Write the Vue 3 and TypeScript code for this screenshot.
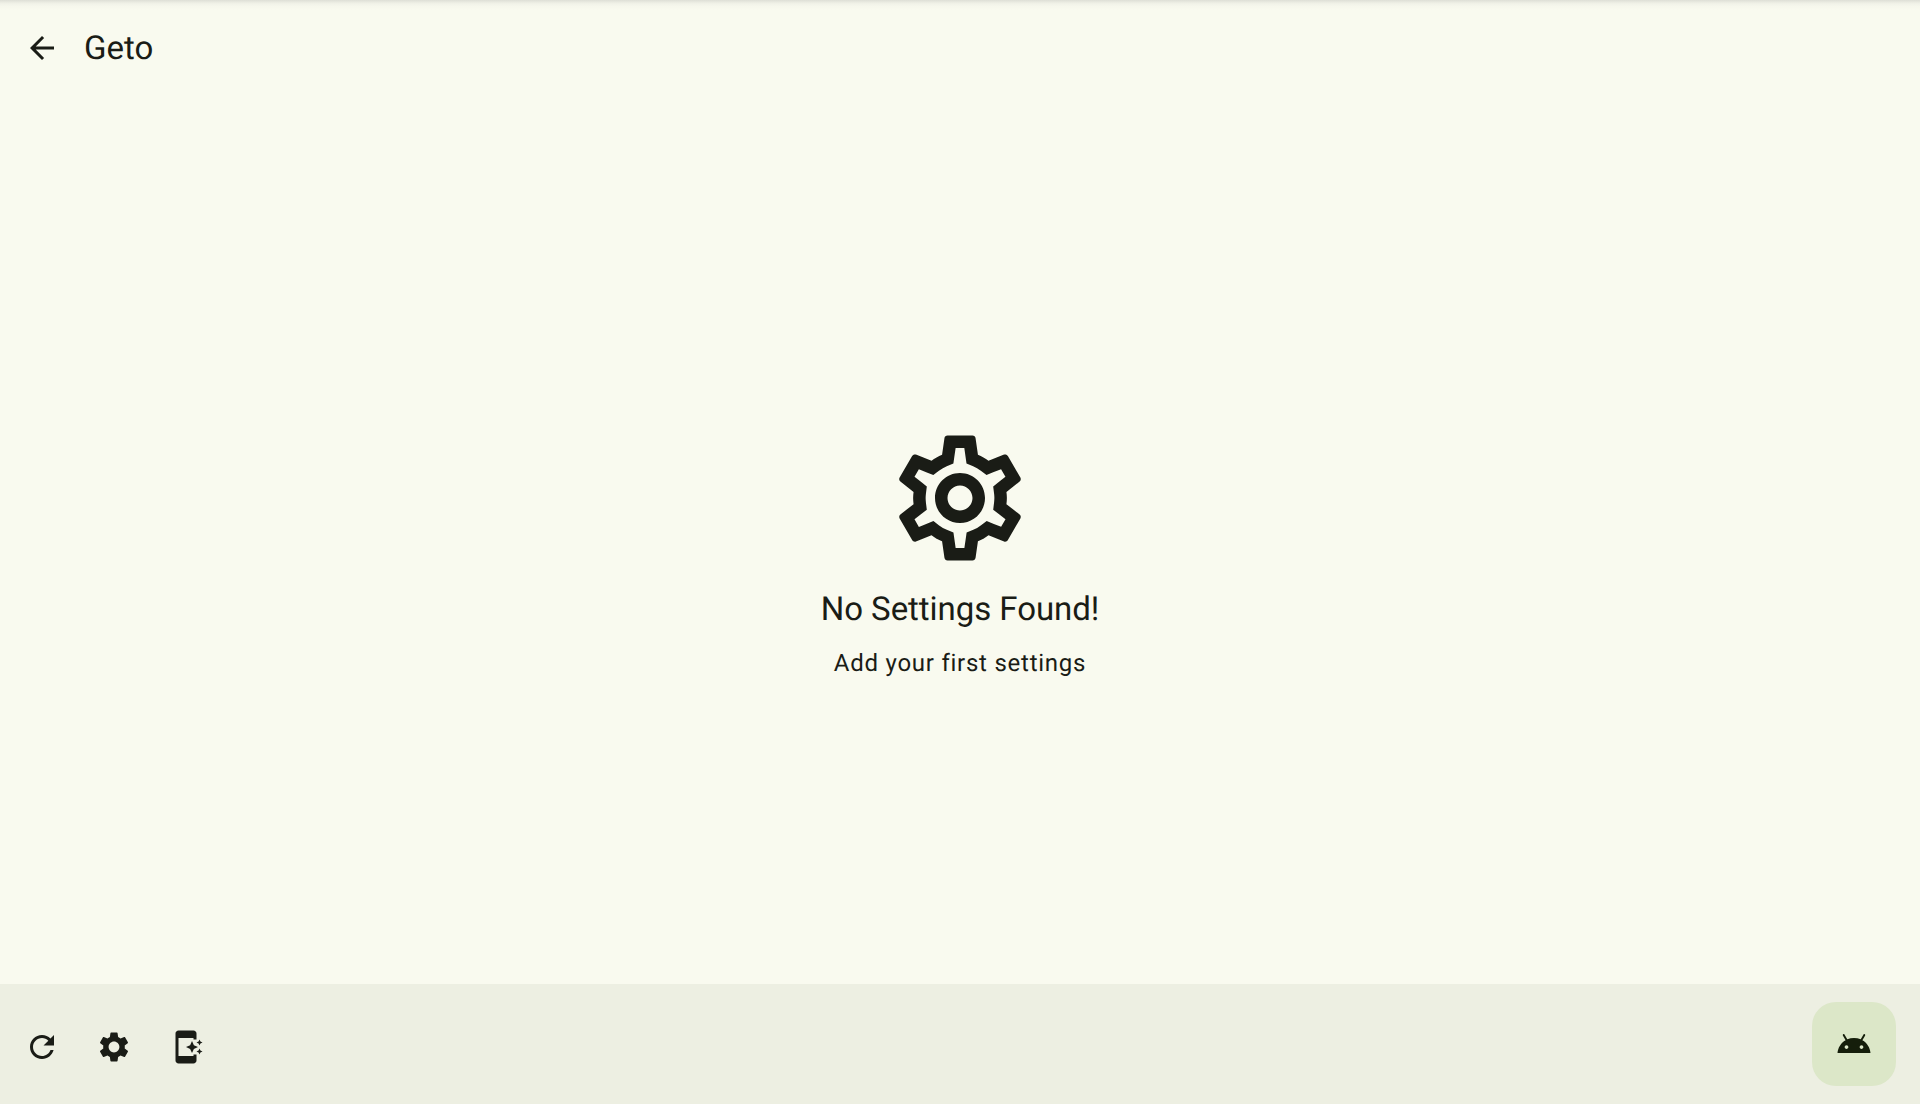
<script setup lang="ts">
interface Action {
  label: string
  path: string
}

const gear =
  'M19.14,12.94c0.04-0.3,0.06-0.61,0.06-0.94c0-0.32-0.02-0.64-0.07-0.94l2.03-1.58c0.18-0.14,0.23-0.41,0.12-0.61l-1.92-3.32c-0.12-0.22-0.37-0.29-0.59-0.22l-2.39,0.96c-0.5-0.38-1.03-0.7-1.62-0.94L14.4,2.81c-0.04-0.24-0.24-0.41-0.48-0.41h-3.84c-0.24,0-0.43,0.17-0.47,0.41L9.25,5.35C8.66,5.59,8.12,5.92,7.63,6.29L5.24,5.33c-0.22-0.08-0.47,0-0.59,0.22L2.74,8.87C2.62,9.08,2.66,9.34,2.86,9.48l2.03,1.58C4.84,11.36,4.8,11.69,4.8,12s0.02,0.64,0.07,0.94l-2.03,1.58c-0.18,0.14-0.23,0.41-0.12,0.61l1.92,3.32c0.12,0.22,0.37,0.29,0.59,0.22l2.39-0.96c0.5,0.38,1.03,0.7,1.62,0.94l0.36,2.54c0.05,0.24,0.24,0.41,0.48,0.41h3.84c0.24,0,0.44-0.17,0.47-0.41l0.36-2.54c0.59-0.24,1.13-0.56,1.62-0.94l2.39,0.96c0.22,0.08,0.47,0,0.59-0.22l1.92-3.32c0.12-0.22,0.07-0.47-0.12-0.61L19.14,12.94zM12,15.6c-1.98,0-3.6-1.62-3.6-3.6s1.62-3.6,3.6-3.6s3.6,1.62,3.6,3.6S13.98,15.6,12,15.6z'

const actions: Action[] = [
  {
    label: 'Revert settings',
    path: 'M17.65,6.35C16.2,4.9 14.21,4 12,4c-4.42,0 -7.99,3.58 -7.99,8s3.57,8 7.99,8c3.73,0 6.84,-2.55 7.73,-6h-2.08c-0.82,2.33 -3.04,4 -5.65,4 -3.31,0 -6,-2.69 -6,-6s2.69,-6 6,-6c1.66,0 3.14,0.69 4.22,1.78L13,11h7V4l-2.35,2.35z',
  },
  { label: 'App settings', path: gear },
  {
    label: 'Shortcut',
    path: 'M17,18H7V6h10v1h2V3c0,-1.1 -0.9,-2 -2,-2H7C5.9,1 5,1.9 5,3v18c0,1.1 0.9,2 2,2h10c1.1,0 2,-0.9 2,-2v-4h-2V18zM20.38,9.62L21,11l0.62,-1.38L23,9l-1.38,-0.62L21,7l-0.62,1.38L19,9L20.38,9.62zM16,8l-1.25,2.75L12,12l2.75,1.25L16,16l1.25,-2.75L20,12l-2.75,-1.25L16,8zM21,13l-0.62,1.38L19,15l1.38,0.62L21,17l0.62,-1.38L23,15l-1.38,-0.62L21,13z',
  },
]
</script>

<template>
  <div class="screen">
    <header class="top-bar">
      <button class="icon-button" aria-label="Back">
        <svg class="icon" viewBox="0 0 24 24">
          <path d="M20,11H7.83l5.59,-5.59L12,4l-8,8 8,8 1.41,-1.41L7.83,13H20v-2z" />
        </svg>
      </button>
      <h1 class="title">Geto</h1>
    </header>

    <main class="empty">
      <svg class="empty-icon" viewBox="0 0 24 24">
        <path
          d="M19.43,12.98c0.04,-0.32 0.07,-0.64 0.07,-0.98 0,-0.34 -0.03,-0.66 -0.07,-0.98l2.11,-1.65c0.19,-0.15 0.24,-0.42 0.12,-0.64l-2,-3.46c-0.09,-0.16 -0.26,-0.25 -0.44,-0.25 -0.06,0 -0.12,0.01 -0.17,0.03l-2.49,1c-0.52,-0.4 -1.08,-0.73 -1.69,-0.98l-0.38,-2.65C14.46,2.18 14.25,2 14,2h-4c-0.25,0 -0.46,0.18 -0.49,0.42l-0.38,2.65c-0.61,0.25 -1.17,0.59 -1.69,0.98l-2.49,-1c-0.06,-0.02 -0.12,-0.03 -0.18,-0.03 -0.17,0 -0.34,0.09 -0.43,0.25l-2,3.46c-0.13,0.22 -0.07,0.49 0.12,0.64l2.11,1.65c-0.04,0.32 -0.07,0.65 -0.07,0.98 0,0.33 0.03,0.66 0.07,0.98l-2.11,1.65c-0.19,0.15 -0.24,0.42 -0.12,0.64l2,3.46c0.09,0.16 0.26,0.25 0.44,0.25 0.06,0 0.12,-0.01 0.17,-0.03l2.49,-1c0.52,0.4 1.08,0.73 1.69,0.98l0.38,2.65c0.03,0.24 0.24,0.42 0.49,0.42h4c0.25,0 0.46,-0.18 0.49,-0.42l0.38,-2.65c0.61,-0.25 1.17,-0.59 1.69,-0.98l2.49,1c0.06,0.02 0.12,0.03 0.18,0.03 0.17,0 0.34,-0.09 0.43,-0.25l2,-3.46c0.12,-0.22 0.07,-0.49 -0.12,-0.64l-2.11,-1.65zM17.45,11.27c0.04,0.31 0.05,0.52 0.05,0.73 0,0.21 -0.02,0.43 -0.05,0.73l-0.14,1.13 0.89,0.7 1.08,0.84 -0.7,1.21 -1.27,-0.51 -1.04,-0.42 -0.9,0.68c-0.43,0.32 -0.84,0.56 -1.25,0.73l-1.06,0.43 -0.16,1.13 -0.2,1.35h-1.4l-0.19,-1.35 -0.16,-1.13 -1.06,-0.43c-0.43,-0.18 -0.83,-0.41 -1.23,-0.71l-0.91,-0.7 -1.06,0.43 -1.27,0.51 -0.7,-1.21 1.08,-0.84 0.89,-0.7 -0.14,-1.13c-0.03,-0.31 -0.05,-0.54 -0.05,-0.74s0.02,-0.43 0.05,-0.73l0.14,-1.13 -0.89,-0.7 -1.08,-0.84 0.7,-1.21 1.27,0.51 1.04,0.42 0.9,-0.68c0.43,-0.32 0.84,-0.56 1.25,-0.73l1.06,-0.43 0.16,-1.13 0.2,-1.35h1.39l0.19,1.35 0.16,1.13 1.06,0.43c0.43,0.18 0.83,0.41 1.23,0.71l0.91,0.7 1.06,-0.43 1.27,-0.51 0.7,1.21 -1.07,0.85 -0.89,0.7 0.14,1.13zM12,8c-2.21,0 -4,1.79 -4,4s1.79,4 4,4 4,-1.79 4,-4 -1.79,-4 -4,-4zM12,14c-1.1,0 -2,-0.9 -2,-2s0.9,-2 2,-2 2,0.9 2,2 -0.9,2 -2,2z"
        />
      </svg>
      <h2 class="empty-title">No Settings Found!</h2>
      <p class="empty-text">Add your first settings</p>
    </main>

    <footer class="bottom-bar">
      <nav class="actions">
        <button v-for="a in actions" :key="a.label" class="icon-button" :aria-label="a.label">
          <svg class="icon" viewBox="0 0 24 24"><path :d="a.path" /></svg>
        </button>
      </nav>
      <button class="fab" aria-label="Launch app">
        <svg class="icon" viewBox="0 0 24 24">
          <path
            d="M17.6,9.48l1.84,-3.18c0.16,-0.31 0.04,-0.69 -0.26,-0.85c-0.29,-0.15 -0.65,-0.06 -0.83,0.22l-1.88,3.24c-2.86,-1.21 -6.08,-1.21 -8.94,0L5.65,5.67c-0.19,-0.29 -0.58,-0.38 -0.87,-0.2C4.5,5.65 4.41,6.01 4.56,6.3L6.4,9.48C3.3,11.25 1.28,14.44 1,18h22C22.72,14.44 20.7,11.25 17.6,9.48zM7,15.25c-0.69,0 -1.25,-0.56 -1.25,-1.25c0,-0.69 0.56,-1.25 1.25,-1.25S8.25,13.31 8.25,14C8.25,14.69 7.69,15.25 7,15.25zM17,15.25c-0.69,0 -1.25,-0.56 -1.25,-1.25c0,-0.69 0.56,-1.25 1.25,-1.25s1.25,0.56 1.25,1.25C18.25,14.69 17.69,15.25 17,15.25z"
          />
        </svg>
      </button>
    </footer>
  </div>
</template>

<style>
body {
  margin: 0;
  overflow: hidden;
}
</style>

<style scoped>
.screen {
  display: flex;
  flex-direction: column;
  height: 100vh;
  background: #f9faef;
  color: #1a1c16;
  font-family: Roboto, 'Liberation Sans', sans-serif;
  text-rendering: geometricPrecision;
}

.top-bar {
  display: flex;
  align-items: center;
  box-sizing: border-box;
  height: 96px;
  padding: 0 6px;
  background: linear-gradient(#dedfd6 0, #e9eae0 2px, #f2f3e9 4px, #f7f8ed 7px, #f9faef 10px);
}

.icon-button {
  display: flex;
  align-items: center;
  justify-content: center;
  width: 72px;
  height: 72px;
  padding: 0;
  border: 0;
  background: none;
  color: inherit;
}

.icon {
  display: block;
  width: 36px;
  height: 36px;
  fill: currentColor;
}

.title,
.empty-title {
  margin: 0;
  font-size: 33px;
  line-height: 42px;
  font-weight: 400;
}

.title {
  margin-left: 6px;
  padding-top: 2px;
}

.empty {
  display: flex;
  flex: 1;
  flex-direction: column;
  align-items: center;
  justify-content: center;
  padding-top: 24px;
}

.empty-icon {
  width: 150px;
  height: 150px;
  fill: currentColor;
}

.empty-title {
  margin-top: 16px;
  letter-spacing: -0.05px;
}

.empty-text {
  margin: 14px 0 0;
  font-size: 24px;
  line-height: 36px;
  letter-spacing: 0.75px;
}

.bottom-bar {
  display: flex;
  align-items: flex-start;
  justify-content: space-between;
  box-sizing: border-box;
  height: 120px;
  padding: 18px 24px 0 6px;
  background: #edefe2;
}

.actions {
  display: flex;
  padding-top: 9px;
}

.fab {
  display: flex;
  align-items: center;
  justify-content: center;
  width: 84px;
  height: 84px;
  padding: 0;
  border: 0;
  border-radius: 24px;
  background: #dce7c8;
  color: #151e0b;
}
</style>
